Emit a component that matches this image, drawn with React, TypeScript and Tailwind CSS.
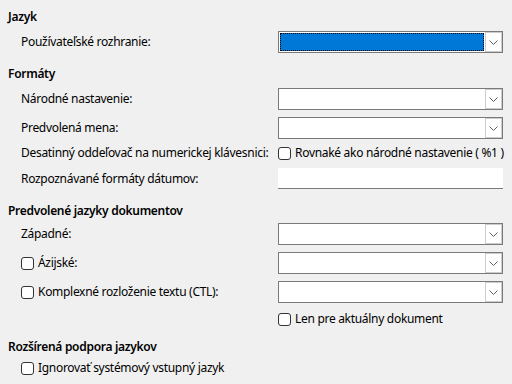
import { ReactNode } from "react";

function Chevron() {
  return (
    <svg width="9" height="5" viewBox="0 0 9 5" className="text-[#606060]">
      <path d="M0.5 0.5 L4.5 4.5 L8.5 0.5" fill="none" stroke="currentColor" strokeWidth="1" />
    </svg>
  );
}

function Combo({ selected = false }: { selected?: boolean }) {
  return (
    <div className="flex h-[22px] w-[225px] border border-[#7a7a7a] bg-white">
      {selected ? (
        <div className="flex-1 p-px">
          <div className="h-full border border-dotted border-black bg-[#0078d7]" />
        </div>
      ) : (
        <div className="flex-1" />
      )}
      <div className="flex w-[17px] items-center justify-center border border-[#cccccc] bg-white">
        <Chevron />
      </div>
    </div>
  );
}

function Box() {
  return <span className="inline-block h-[13px] w-[13px] shrink-0 rounded-[3px] border border-[#333333] bg-white" />;
}

function Check({ children }: { children: ReactNode }) {
  return (
    <span className="flex items-center gap-[4px]">
      <Box />
      <span>{children}</span>
    </span>
  );
}

function Heading({ children, className }: { children: ReactNode; className: string }) {
  return <div className={`h-4 pl-2 font-semibold leading-4 ${className}`}>{children}</div>;
}

function Row({ label, children, className }: { label: ReactNode; children?: ReactNode; className: string }) {
  return (
    <div className={`flex items-center ${className}`}>
      <div className="w-[278px] shrink-0 pl-[21px]">{label}</div>
      {children}
    </div>
  );
}

export default function App() {
  return (
    <div
      className="h-[384px] w-[512px] overflow-hidden whitespace-nowrap bg-[#f0f0f0] pt-[9px] text-[12px] tracking-[-0.3px] text-black"
      style={{ fontFamily: '"Noto Sans", sans-serif' }}
    >
      <Heading className="">Jazyk</Heading>
      <Row className="mt-[6px] h-[22px]" label="Používateľské rozhranie:">
        <Combo selected />
      </Row>

      <Heading className="mt-[13px]">Formáty</Heading>
      <Row className="mt-[6px] h-[22px]" label="Národné nastavenie:">
        <Combo />
      </Row>
      <Row className="mt-[7px] h-[22px]" label="Predvolená mena:">
        <Combo />
      </Row>
      <Row className="mt-[4px] h-[20px]" label="Desatinný oddeľovač na numerickej klávesnici:">
        <Check>Rovnaké ako národné nastavenie ( %1 )</Check>
      </Row>
      <Row className="mt-[5px] h-[21px]" label="Rozpoznávané formáty dátumov:">
        <div className="h-[21px] w-[225px] border-b border-[#7a7a7a] bg-white" />
      </Row>

      <Heading className="mt-[14px]">Predvolené jazyky dokumentov</Heading>
      <Row className="mt-[4px] h-[22px]" label="Západné:">
        <Combo />
      </Row>
      <Row className="mt-[7px] h-[22px]" label={<Check>Ázijské:</Check>}>
        <Combo />
      </Row>
      <Row className="mt-[7px] h-[22px]" label={<Check>Komplexné rozloženie textu (CTL):</Check>}>
        <Combo />
      </Row>
      <Row className="mt-[6px] h-[20px]" label="">
        <Check>Len pre aktuálny dokument</Check>
      </Row>

      <Heading className="mt-[10px]">Rozšírená podpora jazykov</Heading>
      <div className="mt-[3px] flex h-[20px] items-center pl-[21px]">
        <Check>Ignorovať systémový vstupný jazyk</Check>
      </div>
    </div>
  );
}
